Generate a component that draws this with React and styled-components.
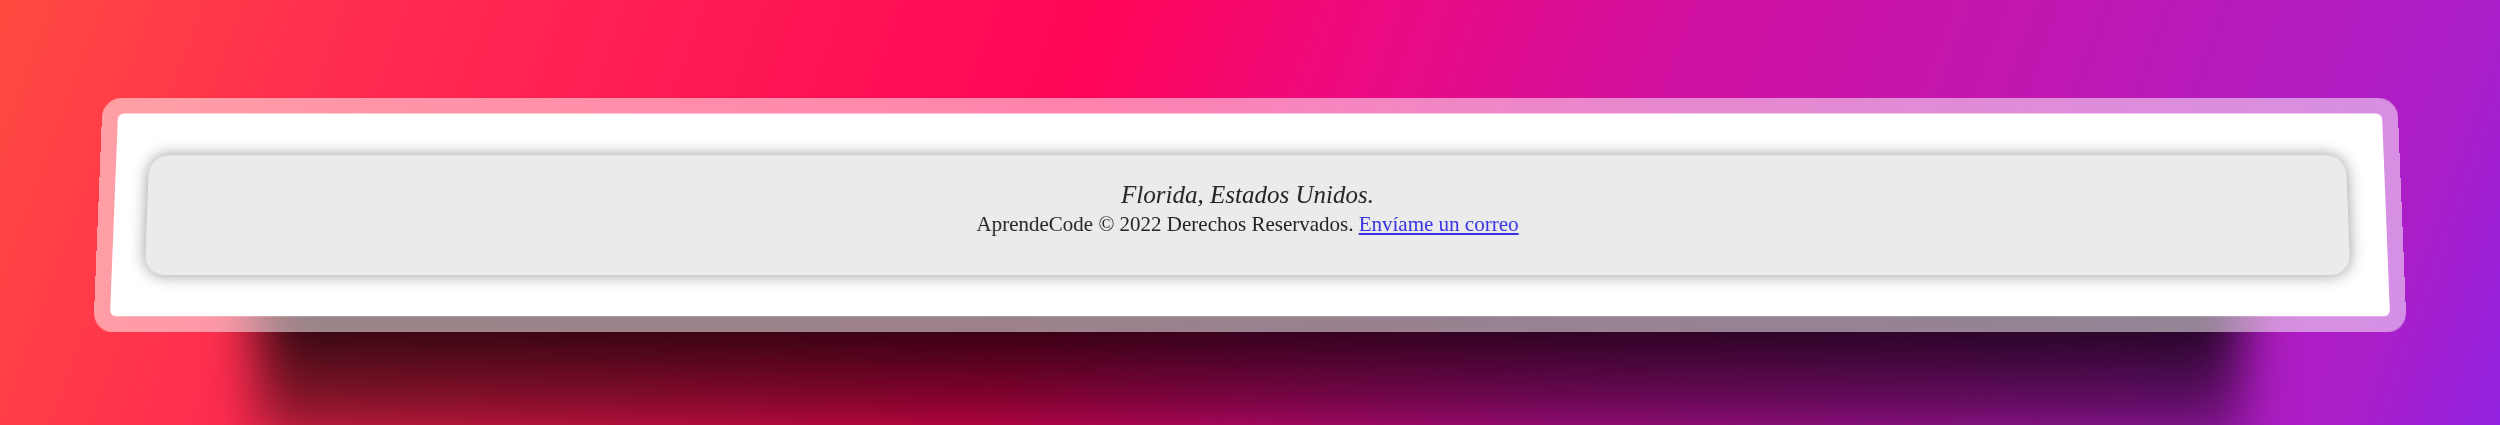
import React from 'react'
import styled, { createGlobalStyle } from 'styled-components'

const GlobalStyle = createGlobalStyle`
    html, body {
        margin: 0;
        padding: 0;
    }
    body {
        width: 2500px;
        height: 425px;
        overflow: hidden;
        font-family: "Liberation Serif", "Times New Roman", serif;
        background: linear-gradient(
            110deg,
            #ff4a40 0%,
            #ff2c50 14%,
            #ff0558 42%,
            #ec0a80 52%,
            #d010a0 64%,
            #bd18b4 80%,
            #aa1ec8 94%,
            #9222e0 100%
        );
    }
`

const Stage = styled.div`
    height: 425px;
    box-sizing: border-box;
    padding-top: 97px;
    display: flex;
    justify-content: center;
`

const Holder = styled.div`
    position: relative;
    width: 2304px;
    height: 235px;

    &::before {
        content: '';
        position: absolute;
        left: 160px;
        right: 160px;
        top: 120px;
        bottom: -110px;
        background: linear-gradient(rgba(0, 0, 0, 0.88) 40%, rgba(0, 0, 0, 0.3));
        filter: blur(26px);
        z-index: -1;
    }
`

const Frame = styled.div`
    width: 100%;
    height: 100%;
    box-sizing: border-box;
    padding: 16px;
    border-radius: 20px;
    background: rgba(255, 255, 255, 0.5);
    transform: perspective(1500px) rotateX(3deg);
`

const Screen = styled.div`
    height: 100%;
    box-sizing: border-box;
    padding: 42px 38px 0 33px;
    background: #ffffff;
    border-radius: 6px;
`

const Footer = styled.footer`
    height: 120px;
    box-sizing: border-box;
    padding-top: 26px;
    background: #ebebeb;
    border-radius: 20px;
    box-shadow: 0 0 16px rgba(0, 0, 0, 0.42);
    text-align: center;
    color: #222;
`

const Place = styled.p`
    margin: 0;
    font-size: 25px;
    line-height: 28px;
    font-style: italic;
`

const Copy = styled.p`
    margin: 3px 0 0;
    font-size: 21px;
    line-height: 24px;
`

const Mail = styled.a`
    color: #3430e2;
    text-decoration: underline;
`

const App = () => {
    return (
        <>
            <GlobalStyle />
            <Stage>
                <Holder>
                    <Frame>
                        <Screen>
                            <Footer>
                                <Place>Florida, Estados Unidos.</Place>
                                <Copy>
                                    AprendeCode © 2022 Derechos Reservados.{' '}
                                    <Mail href="mailto:contacto@aprendecode.com">Envíame un correo</Mail>
                                </Copy>
                            </Footer>
                        </Screen>
                    </Frame>
                </Holder>
            </Stage>
        </>
    )
}

export default App
